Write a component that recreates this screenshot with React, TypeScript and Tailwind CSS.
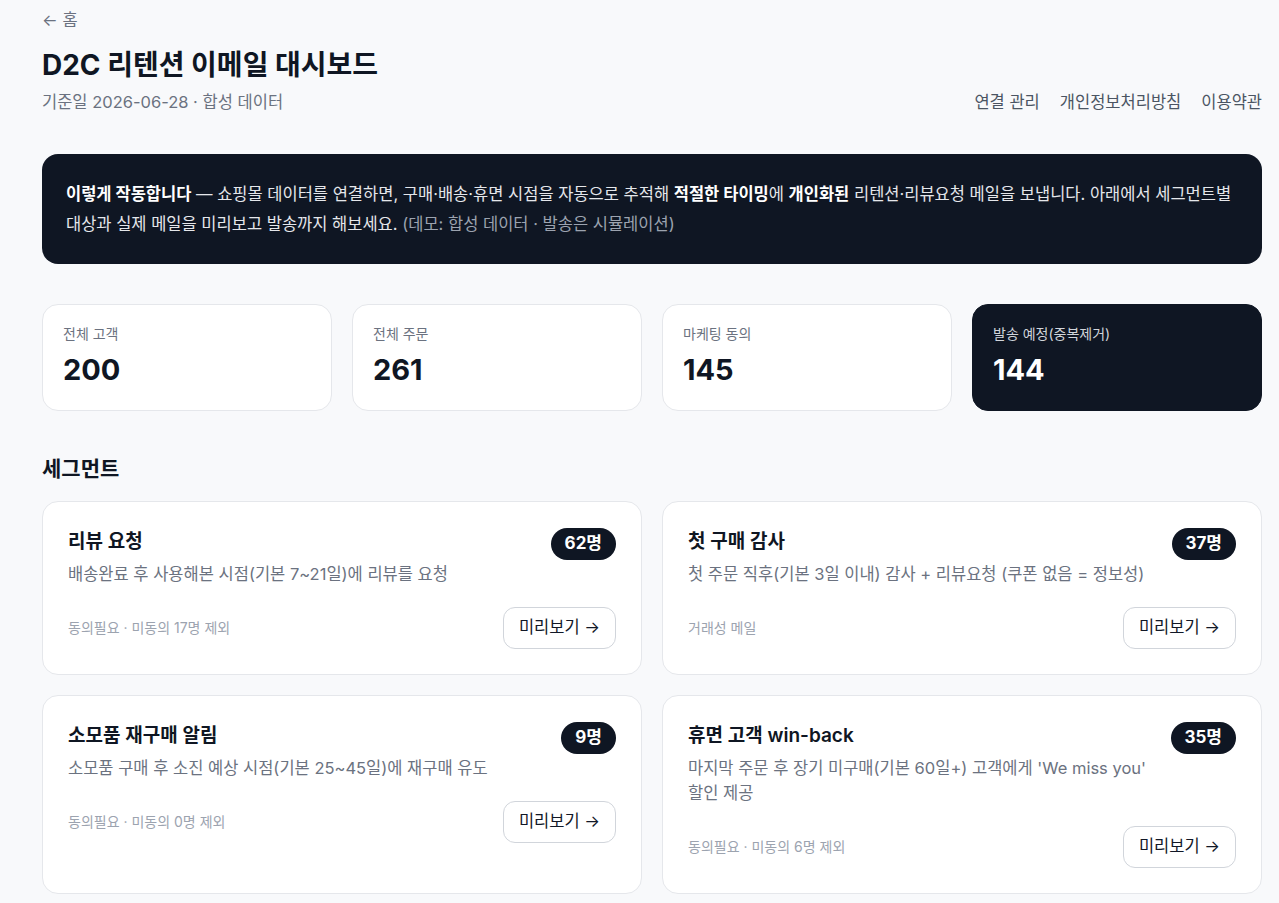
import React from 'react'

const font = { fontFamily: 'Inter, "Noto Sans CJK KR", sans-serif' }

type Stat = { label: string, value: string, dark?: boolean }
type Segment = { title: string, desc: string, count: string, note: string }

const stats: Stat[] = [
    { label: '전체 고객', value: '200' },
    { label: '전체 주문', value: '261' },
    { label: '마케팅 동의', value: '145' },
    { label: '발송 예정(중복제거)', value: '144', dark: true },
]

const segments: Segment[] = [
    { title: '리뷰 요청', desc: '배송완료 후 사용해본 시점(기본 7~21일)에 리뷰를 요청', count: '62명', note: '동의필요 · 미동의 17명 제외' },
    { title: '첫 구매 감사', desc: '첫 주문 직후(기본 3일 이내) 감사 + 리뷰요청 (쿠폰 없음 = 정보성)', count: '37명', note: '거래성 메일' },
    { title: '소모품 재구매 알림', desc: '소모품 구매 후 소진 예상 시점(기본 25~45일)에 재구매 유도', count: '9명', note: '동의필요 · 미동의 0명 제외' },
    { title: '휴면 고객 win-back', desc: "마지막 주문 후 장기 미구매(기본 60일+) 고객에게 'We miss you' 할인 제공", count: '35명', note: '동의필요 · 미동의 6명 제외' },
]

function StatCard({ stat }: { stat: Stat }) {
    const box = stat.dark
        ? 'bg-[#0f1623] border-[#0f1623] text-white'
        : 'bg-white border-[#e5e7eb] text-[#0f1623]'
    return (
        <div className={`rounded-2xl border px-5 pt-[19px] pb-[22px] ${box}`}>
            <div className={`text-[14px] leading-[20px] ${stat.dark ? 'text-[#d1d5db]' : 'text-[#6b7280]'}`}>{stat.label}</div>
            <div className="mt-[8px] text-[29px] font-bold leading-[36px]">{stat.value}</div>
        </div>
    )
}

function SegmentCard({ seg }: { seg: Segment }) {
    return (
        <div className="rounded-2xl border border-[#e5e7eb] bg-white px-[25px] pt-[26px] pb-[25px]">
            <div className="flex items-start justify-between gap-4">
                <div className="flex-1">
                    <div className="text-[19px] font-semibold leading-[28px] text-[#0f1623]">{seg.title}</div>
                    <div className="mt-[6px] break-keep text-[16.5px] leading-[25px] text-[#6b7280]">{seg.desc}</div>
                </div>
                <span className="flex h-[32px] shrink-0 items-center rounded-full bg-[#0f1623] px-[14px] text-[17px] font-bold text-white">{seg.count}</span>
            </div>
            <div className="mt-[20px] flex items-center justify-between">
                <span className="text-[14px] text-[#9ca3af]">{seg.note}</span>
                <button className="h-[42px] rounded-xl border border-[#d1d5db] bg-white px-[15px] text-[16.5px] text-[#111827]">미리보기 →</button>
            </div>
        </div>
    )
}

export default function App() {
    return (
        <div className="min-h-screen bg-[#f8f9fb]" style={font}>
            <div className="pl-[42px] pr-[17px] pt-[8px] pb-10">
                <a className="text-[16.5px] leading-[22px] text-[#6b7280]">← 홈</a>

                <div className="mt-[13px] text-[28px] font-bold leading-[40px] text-[#0f1623]">D2C 리텐션 이메일 대시보드</div>
                <div className="mt-[5px] flex items-center justify-between">
                    <span className="text-[16.5px] text-[#6b7280]">기준일 2026-06-28 · 합성 데이터</span>
                    <div className="flex gap-5 text-[16.5px] text-[#4b5563]">
                        <a>연결 관리</a>
                        <a>개인정보처리방침</a>
                        <a>이용약관</a>
                    </div>
                </div>

                <div className="mt-[39px] break-keep rounded-2xl bg-[#0f1623] px-6 py-[25px] text-[16.5px] leading-[30px] text-[#e5e7eb]">
                    <b className="text-white">이렇게 작동합니다</b> — 쇼핑몰 데이터를 연결하면, 구매·배송·휴면 시점을 자동으로 추적해 <b className="text-white">적절한 타이밍</b>에 <b className="text-white">개인화된</b> 리텐션·리뷰요청 메일을 보냅니다. 아래에서 세그먼트별 대상과 실제 메일을 미리보고 발송까지 해보세요. <span className="text-[#9ca3af]">(데모: 합성 데이터 · 발송은 시뮬레이션)</span>
                </div>

                <div className="mt-10 grid grid-cols-4 gap-5">
                    {stats.map(s => (
                        <StatCard key={s.label} stat={s} />
                    ))}
                </div>

                <div className="mt-[44px] text-[21px] font-semibold leading-[28px] text-[#0f1623]">세그먼트</div>
                <div className="mt-[18px] grid grid-cols-2 gap-5">
                    {segments.map(seg => (
                        <SegmentCard key={seg.title} seg={seg} />
                    ))}
                </div>
            </div>
        </div>
    )
}
